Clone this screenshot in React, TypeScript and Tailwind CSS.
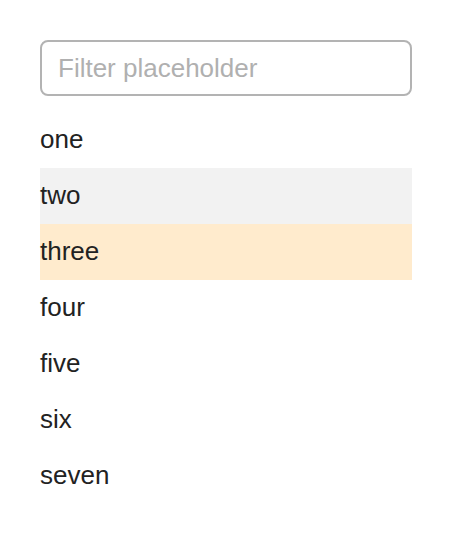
import React from 'react';

const items = ['one', 'two', 'three', 'four', 'five', 'six', 'seven'];

const App: React.FC = () => {
    const hovered = 1;
    const selected = 2;

    return (
        <div className="p-10 bg-white text-[#222] font-['Liberation_Sans',Arial,sans-serif]">
            <input
                type="text"
                placeholder="Filter placeholder"
                className="w-[372px] h-14 px-4 text-[26px] border-2 border-[#b3b3b3] rounded-lg outline-none placeholder:text-[#b0b0b0]"
            />
            <ul className="mt-4 w-[372px]">
                {items.map((item, i) => (
                    <li
                        key={item}
                        className={
                            'h-14 flex items-center pb-0.5 text-[26px] ' +
                            (i === selected ? 'bg-[#ffebcd]' : i === hovered ? 'bg-[#f2f2f2]' : '')
                        }
                    >
                        {item}
                    </li>
                ))}
            </ul>
        </div>
    );
};

export default App;
